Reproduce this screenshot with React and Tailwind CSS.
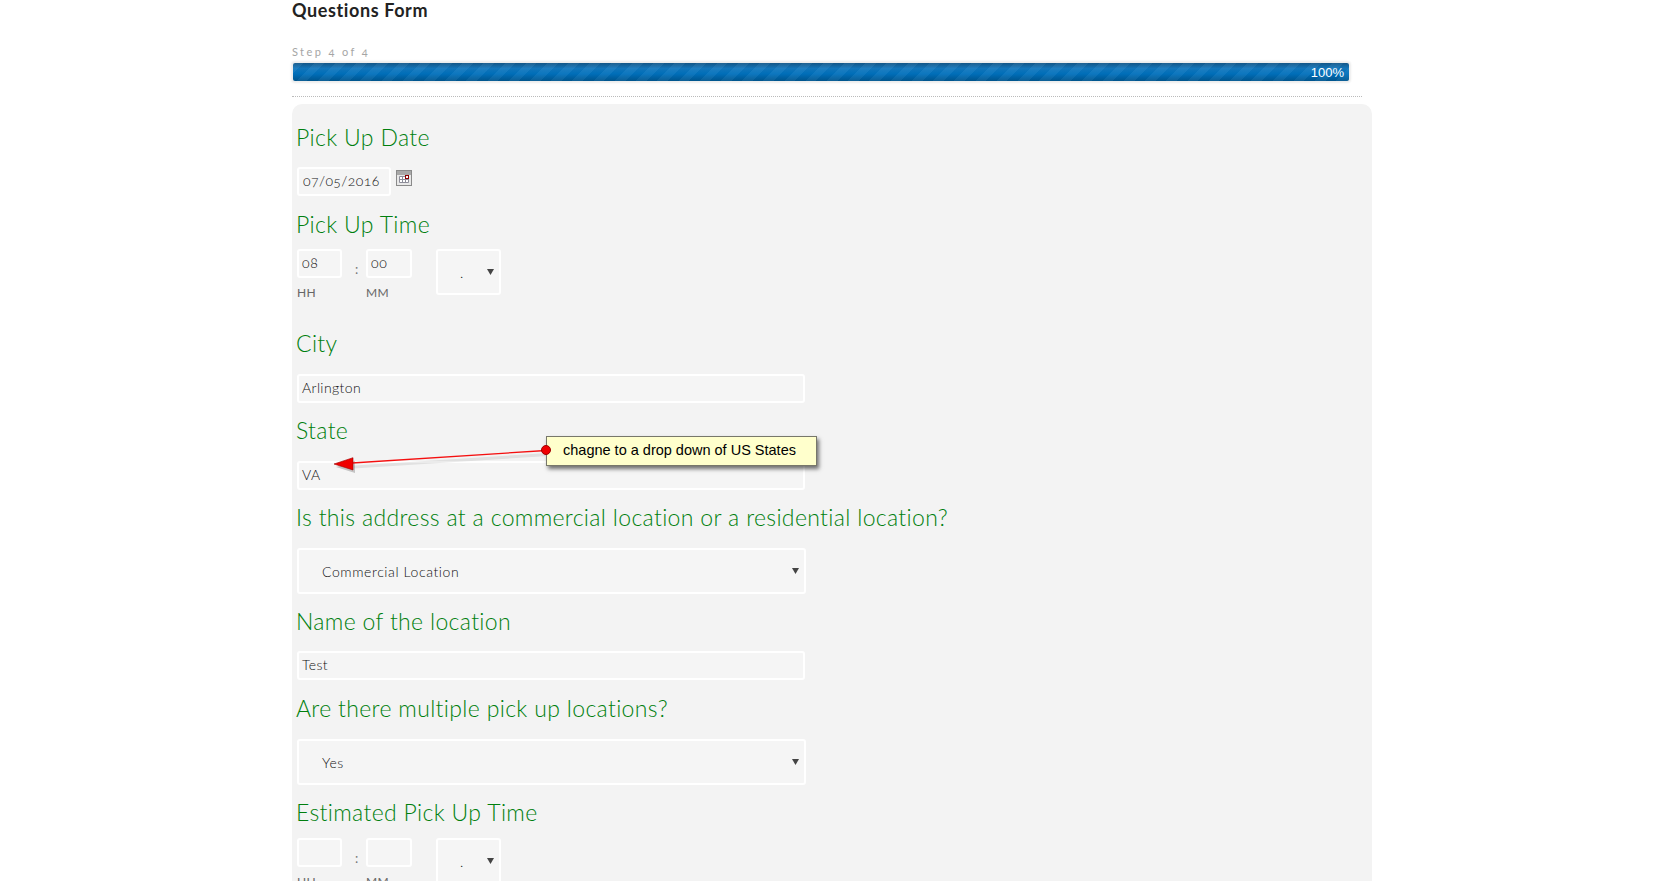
function Heading({ children, className = '' }) {
  return (
    <h3 className={`h-[26px] pl-[4px] text-[23px] leading-[26px] font-light tracking-[0.34px] text-[#007f0e] whitespace-nowrap ${className}`}>
      {children}
    </h3>
  );
}

function TextBox({ value, className = '' }) {
  return (
    <div className={`ml-[5px] h-[29px] border-2 border-white rounded-[3px] bg-[#f5f5f5] pl-[3px] text-[14px] leading-[24px] font-light tracking-[0.4px] text-[#111] ${className}`}>
      {value}
    </div>
  );
}

function Caret() {
  return (
    <svg width="7" height="6" viewBox="0 0 7 6" className="shrink-0">
      <path d="M0 0h7L3.5 6z" fill="#444" />
    </svg>
  );
}

function SelectBox({ value, className = '' }) {
  return (
    <div className={`flex items-center justify-between border-2 border-white rounded-[3px] bg-[#f5f5f5] text-[14px] font-light tracking-[0.6px] text-[#111] ${className}`}>
      <span>{value}</span>
      <Caret />
    </div>
  );
}

function TimeRow({ hh = '', mm = '' }) {
  return (
    <div className="flex items-start pl-[5px]">
      <div className="w-[45px]">
        <div className="h-[29px] border-2 border-white rounded-[3px] bg-[#f5f5f5] pl-[3px] text-[14px] leading-[23px] font-light tracking-[0.7px] text-[#111]">{hh}</div>
        <div className="mt-[7px] text-[12px] leading-[16px] tracking-[0.4px] text-[#666]">HH</div>
      </div>
      <div className="w-[24px] pt-[12px] pl-[13px] text-[13px] leading-[16px] text-[#777]">:</div>
      <div className="w-[46px]">
        <div className="h-[29px] border-2 border-white rounded-[3px] bg-[#f5f5f5] pl-[3px] text-[14px] leading-[23px] font-light tracking-[0.7px] text-[#111]">{mm}</div>
        <div className="mt-[7px] text-[12px] leading-[16px] tracking-[0.3px] text-[#666]">MM</div>
      </div>
      <SelectBox value="." className="ml-[24px] w-[65px] h-[46px] pl-[22px] pr-[5px] text-[10px]" />
    </div>
  );
}

function CalendarIcon() {
  return (
    <svg width="16" height="16" viewBox="0 0 16 16" className="ml-[5px] mt-[3px] shrink-0">
      <rect x="0.5" y="0.5" width="15" height="15" fill="#e8e8e8" stroke="#8a8a8a" />
      <rect x="1" y="1" width="14" height="4" fill="#a8a8a8" />
      <path d="M3.5 6.5h9v6h-9zM3.5 9.5h9M6.5 6.5v6M9.5 6.5v6" fill="#fff" stroke="#8d8d99" />
      <rect x="9.5" y="5.5" width="3" height="3" fill="#fff" stroke="#8b0000" />
    </svg>
  );
}

function Annotation() {
  return (
    <>
      <svg width="240" height="50" viewBox="0 0 240 50" className="absolute left-[325px] top-[433px] overflow-visible">
        <line x1="221" y1="17.5" x2="27" y2="30" stroke="#000" strokeOpacity="0.08" strokeWidth="3" transform="translate(2 4)" />
        <path d="M9 31L28 24.7L28 37z" fill="#000" fillOpacity="0.2" transform="translate(2 3)" />
        <line x1="221" y1="17.5" x2="27" y2="30" stroke="#f40f0f" strokeWidth="1.3" />
        <path d="M9 31L28 24.7L28 37z" fill="#f00000" stroke="#a00000" strokeWidth="0.6" />
      </svg>
      <div className="absolute left-[546px] top-[436px] flex h-[30px] w-[271px] items-center border border-[#77776a] bg-[#ffffcc] pl-[16px] font-['Liberation_Sans',sans-serif] text-[14.5px] text-black shadow-[2px_3px_4px_rgba(0,0,0,0.55)] whitespace-nowrap">
        chagne to a drop down of US States
      </div>
      <div className="absolute left-[541px] top-[445px] h-[10px] w-[10px] rounded-full border border-[#a00000] bg-[#f00000]" />
    </>
  );
}

export default function App() {
  return (
    <div className="relative h-[881px] overflow-hidden bg-white font-['Lato',sans-serif] [font-variant-numeric:oldstyle-nums]">
      <div className="ml-[292px] w-[1080px]">
        <h2 className="h-[21px] text-[18px] leading-[21px] font-bold tracking-[0.6px] text-[#222]">Questions Form</h2>

        <div className="mt-[24px] h-[14px] text-[11px] leading-[14px] tracking-[2.4px] text-[#a5a5a5]">Step 4 of 4</div>

        <div className="mt-[4px] ml-[1px] w-[1056px] h-[18px] rounded-[2px] shadow-[0_0_2px_2px_rgba(0,0,0,0.08)] bg-[repeating-linear-gradient(135deg,rgba(255,255,255,0.05)_0_7.5px,rgba(0,0,0,0.02)_7.5px_15px),linear-gradient(180deg,#14588a_0%,#1277bd_30%,#0070bc_60%,#00568f_100%)] flex items-center justify-end pr-[5px] pt-px font-['Liberation_Sans',sans-serif] text-[13px] text-white">
          100%
        </div>

        <div className="mt-[15px] w-[1070px] border-t border-dotted border-[#bbb]" />

        <div className="mt-[7px] h-[800px] rounded-[10px] bg-[#f3f3f3]">
          <Heading className="mt-0 pt-[20px] box-content">Pick Up Date</Heading>
          <div className="flex items-start mt-[17px]">
            <TextBox value="07/05/2016" className="w-[94px] pl-[4px]" />
            <CalendarIcon />
          </div>

          <Heading className="mt-[15px]">Pick Up Time</Heading>
          <div className="mt-[12px]"><TimeRow hh="08" mm="00" /></div>

          <Heading className="mt-[29px]">City</Heading>
          <TextBox value="Arlington" className="mt-[18px] w-[508px]" />

          <Heading className="mt-[14px]">State</Heading>
          <TextBox value="VA" className="mt-[18px] w-[508px]" />

          <Heading className="mt-[14px]">Is this address at a commercial location or a residential location?</Heading>
          <SelectBox value="Commercial Location" className="mt-[18px] ml-[5px] w-[509px] h-[46px] pl-[23px] pr-[5px]" />

          <Heading className="mt-[14px]">Name of the location</Heading>
          <TextBox value="Test" className="mt-[17px] w-[508px]" />

          <Heading className="mt-[15px]">Are there multiple pick up locations?</Heading>
          <SelectBox value="Yes" className="mt-[18px] ml-[5px] w-[509px] h-[46px] pl-[23px] pr-[5px]" />

          <Heading className="mt-[14px]">Estimated Pick Up Time</Heading>
          <div className="mt-[13px]"><TimeRow /></div>
        </div>
      </div>
      <Annotation />
    </div>
  );
}
